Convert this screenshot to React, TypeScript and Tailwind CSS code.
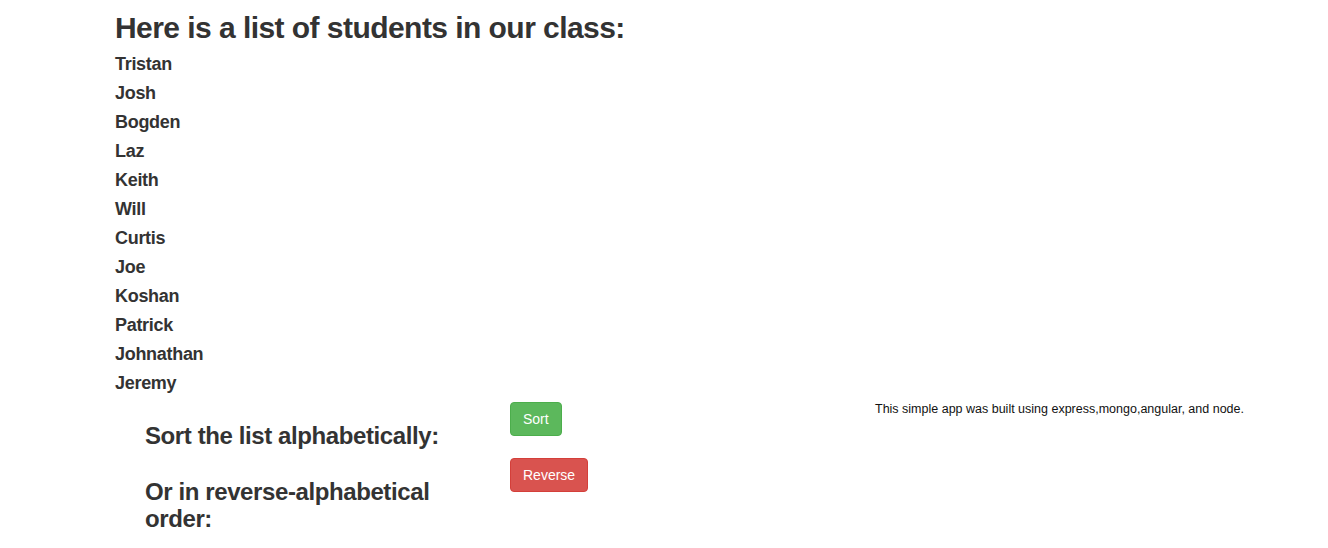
import React from "react";

const students = [
  "Tristan",
  "Josh",
  "Bogden",
  "Laz",
  "Keith",
  "Will",
  "Curtis",
  "Joe",
  "Koshan",
  "Patrick",
  "Johnathan",
  "Jeremy",
];

export default function App() {
  return (
    <div className="min-h-[548px] bg-white text-[#333] font-['Liberation_Sans',Arial,sans-serif]">
      <div className="pl-[115px]">
        <h2 className="mt-[11px] text-[30px] leading-[33px] font-bold tracking-[-0.55px]">
          Here is a list of students in our class:
        </h2>
        <div className="mt-[6px] flex flex-col">
          {students.map((s) => (
            <h4 key={s} className="text-[18px] leading-[29px] font-bold tracking-[-0.3px]">
              {s}
            </h4>
          ))}
        </div>
      </div>
      <div className="flex pl-[145px]">
        <div className="w-[365px] pt-[25px]">
          <h3 className="max-w-[320px] text-[24px] leading-[26.4px] font-bold tracking-[-0.4px]">
            Sort the list alphabetically:
          </h3>
          <h3 className="mt-[30px] max-w-[320px] text-[24px] leading-[26.4px] font-bold tracking-[-0.4px]">
            Or in reverse-alphabetical order:
          </h3>
        </div>
        <div className="w-[365px] pt-[4px] flex flex-col items-start gap-[22px]">
          <button className="px-[12px] py-[6px] text-[14px] leading-[20px] text-white bg-[#5cb85c] border border-[#4cae4c] rounded-[4px]">
            Sort
          </button>
          <button className="px-[12px] py-[6px] text-[14px] leading-[20px] text-white bg-[#d9534f] border border-[#d43f3a] rounded-[4px]">
            Reverse
          </button>
        </div>
        <div className="pt-[3px]">
          <p className="text-[12.5px] leading-[17px] text-[#111]">
            This simple app was built using express,mongo,angular, and node.
          </p>
        </div>
      </div>
    </div>
  );
}
